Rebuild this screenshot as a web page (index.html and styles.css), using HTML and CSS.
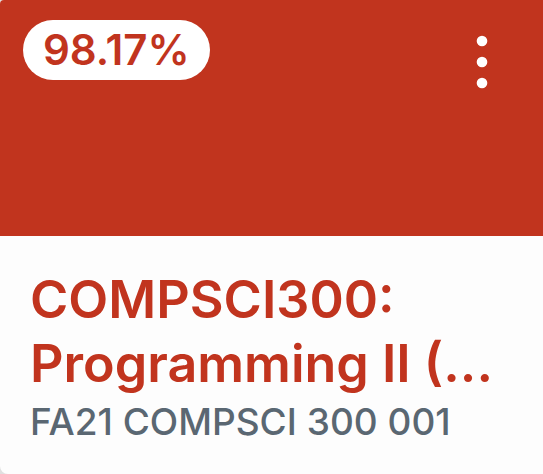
FILE: index.html
```
<!DOCTYPE html>
<html lang="en">
<head>
<meta charset="utf-8">
<title>COMPSCI300</title>
<link rel="stylesheet" href="styles.css">
</head>
<body>
<article class="card">
  <header class="hero">
    <span class="grade">98.17%</span>
    <button class="menu" type="button" aria-label="Course options">
      <svg class="dots" viewBox="0 0 12 56" aria-hidden="true"><circle cx="6" cy="7" r="5.3"/><circle cx="6" cy="28" r="5.3"/><circle cx="6" cy="49" r="5.3"/></svg>
    </button>
  </header>
  <div class="body">
    <h2 class="title"><a class="link" href="#">COMPSCI300:<br>Programming II (...</a></h2>
    <p class="term">FA21 COMPSCI 300 001</p>
  </div>
</article>
</body>
</html>
```
FILE: styles.css
```
body {
  margin: 0;
  background: #e0e0e0;
  font-family: Inter, "Liberation Sans", sans-serif;
}
.card {
  min-height: 100vh;
  overflow: hidden;
  border-radius: 4px 0 0 8px;
  background: #fdfdfd;
}
.hero {
  display: flex;
  justify-content: space-between;
  align-items: flex-start;
  height: 236px;
  box-sizing: border-box;
  padding: 20px 44px 0 23px;
  background: #c1341e;
}
.grade {
  padding: 0 20px;
  border-radius: 30px;
  background: #fff;
  color: #c1341e;
  font-size: 42px;
  font-weight: 600;
  line-height: 60px;
}
.menu {
  display: flex;
  justify-content: center;
  width: 34px;
  padding: 14px 0;
  border: 0;
  background: none;
}
.dots {
  width: 12px;
  height: 56px;
  fill: #fff;
}
.body {
  padding: 32px 30px 0;
}
.title {
  margin: 0;
  font-size: 52px;
  font-weight: 600;
  line-height: 64px;
  white-space: nowrap;
}
.link {
  color: #c1341e;
  text-decoration: none;
}
.term {
  margin: 0;
  color: #5a6772;
  font-size: 37px;
  font-weight: 500;
  line-height: 52px;
  white-space: nowrap;
}
```
